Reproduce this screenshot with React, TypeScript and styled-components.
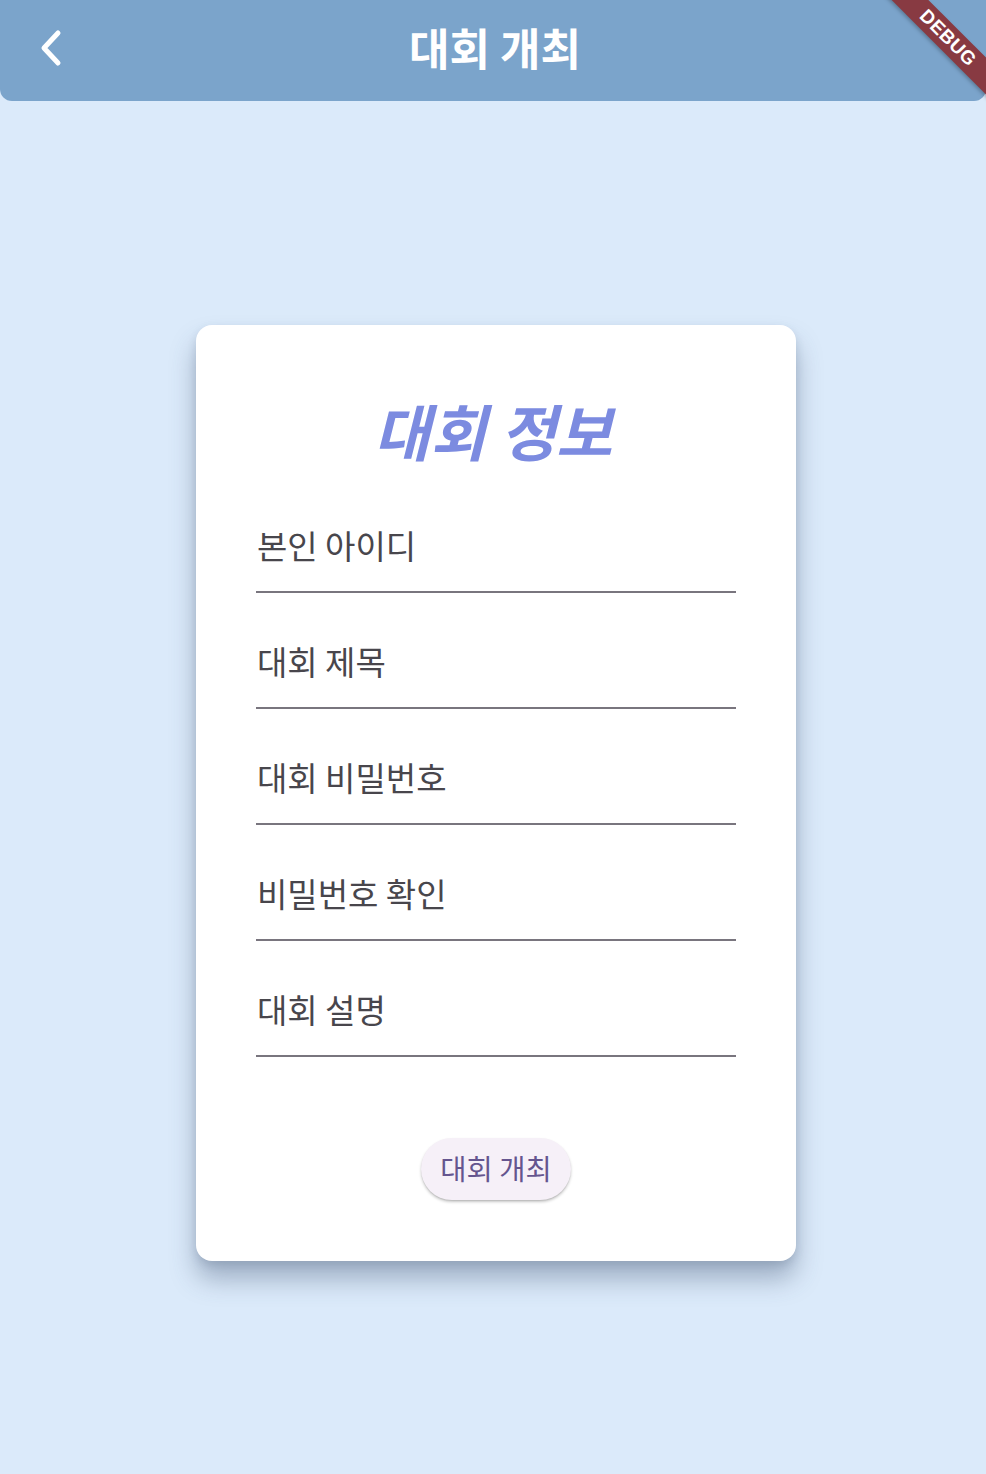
import React from "react";
import styled, { createGlobalStyle } from "styled-components";

const GlobalStyle = createGlobalStyle`
  html, body {
    margin: 0;
    padding: 0;
    background: #dbeafa;
  }
  body {
    font-family: "Noto Sans CJK KR", "Noto Sans", sans-serif;
  }
`;

const Page = styled.div`
  position: relative;
  width: 986px;
  min-height: 1474px;
  background: #dbeafa;
  overflow: hidden;
`;

const AppBar = styled.header`
  height: 101px;
  background: #7ba4cb;
  border-radius: 0 0 12px 12px;
  display: grid;
  grid-template-columns: 1fr auto 1fr;
  align-items: center;
  padding: 0 0 6px 4px;
  box-sizing: border-box;
`;

const BackButton = styled.button`
  justify-self: start;
  margin-left: 32px;
  width: 32px;
  height: 40px;
  padding: 0;
  border: none;
  background: transparent;
  display: flex;
  align-items: center;
  justify-content: center;
  cursor: pointer;
`;

const AppTitle = styled.h1`
  margin: 0;
  color: #ffffff;
  font-size: 44px;
  font-weight: 700;
  line-height: 1.2;
  letter-spacing: 0;
`;

const Body = styled.main`
  display: flex;
  justify-content: center;
  padding: 224px 0 0 6px;
`;

const Card = styled.section`
  width: 600px;
  box-sizing: border-box;
  background: #ffffff;
  border-radius: 16px;
  padding: 70px 60px 61px;
  box-shadow: 0 18px 26px rgba(60, 80, 110, 0.38), 0 4px 8px rgba(60, 80, 110, 0.15);
  display: flex;
  flex-direction: column;
`;

const CardTitle = styled.h2`
  margin: 0 0 12px;
  text-align: center;
  color: #7c8be0;
  font-size: 61px;
  font-weight: 700;
  font-style: italic;
  line-height: 70px;
  padding-right: 6px;
`;

const Field = styled.label`
  height: 116px;
  box-sizing: border-box;
  display: flex;
  flex-direction: column;
  justify-content: flex-end;
  padding-bottom: 22px;
  border-bottom: 2px solid #79757e;
`;

const FieldLabel = styled.span`
  color: #48464c;
  font-size: 33px;
  line-height: 48px;
  padding-left: 1px;
`;

const Actions = styled.div`
  display: flex;
  justify-content: center;
  padding-top: 81px;
`;

const SubmitButton = styled.button`
  width: 150px;
  height: 62px;
  border: none;
  border-radius: 31px;
  background: #f6f0f8;
  color: #65558f;
  font-family: "Noto Sans CJK KR", "Noto Sans", sans-serif;
  font-size: 28.5px;
  line-height: 1;
  padding: 0 0 2px;
  box-shadow: 0 2px 3px rgba(0, 0, 0, 0.22), 0 1px 1px rgba(0, 0, 0, 0.08);
  cursor: pointer;
`;

const BannerClip = styled.div`
  position: absolute;
  top: 0;
  right: 0;
  width: 120px;
  height: 120px;
  overflow: hidden;
  pointer-events: none;
`;

const Ribbon = styled.div`
  position: absolute;
  left: -18px;
  top: 25px;
  width: 200px;
  height: 26px;
  transform: rotate(45deg);
  background: #883a42;
  box-shadow: 0 2px 4px rgba(0, 0, 0, 0.25);
  color: #ffffff;
  font-family: "Liberation Sans", "DejaVu Sans", sans-serif;
  font-weight: 700;
  font-size: 19px;
  line-height: 26px;
  text-align: center;
  letter-spacing: 0.5px;
`;

const fields = ["본인 아이디", "대회 제목", "대회 비밀번호", "비밀번호 확인", "대회 설명"];

export default function App() {
  return (
    <Page>
      <GlobalStyle />
      <AppBar>
        <BackButton aria-label="back">
          <svg width="32" height="40" viewBox="0 0 32 40">
            <polyline
              points="22,5 8,20 22,35"
              fill="none"
              stroke="#ffffff"
              strokeWidth="5"
              strokeLinecap="round"
              strokeLinejoin="round"
            />
          </svg>
        </BackButton>
        <AppTitle>대회 개최</AppTitle>
        <div />
      </AppBar>
      <Body>
        <Card>
          <CardTitle>대회 정보</CardTitle>
          {fields.map((f) => (
            <Field key={f}>
              <FieldLabel>{f}</FieldLabel>
            </Field>
          ))}
          <Actions>
            <SubmitButton>대회 개최</SubmitButton>
          </Actions>
        </Card>
      </Body>
      <BannerClip>
        <Ribbon>DEBUG</Ribbon>
      </BannerClip>
    </Page>
  );
}
